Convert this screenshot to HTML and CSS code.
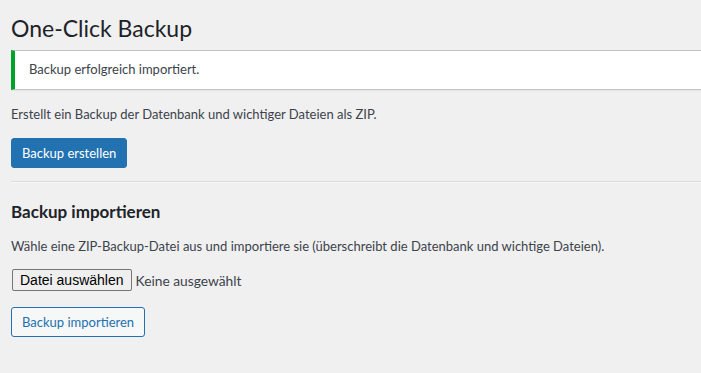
FILE: index.html
```html
<!DOCTYPE html>
<html>
<head>
  <meta charset="UTF-8">
  <title>One-Click Backup</title>
  <link rel="stylesheet" href="styles.css">
</head>
<body>
  <div class="wrap">
    <h1>One-Click Backup</h1>

    <div class="notice notice-success">
      <p>Backup erfolgreich importiert.</p>
    </div>

    <p>Erstellt ein Backup der Datenbank und wichtiger Dateien als ZIP.</p>
    <form class="backup-form">
      <button type="button" class="button button-primary">Backup erstellen</button>
    </form>

    <hr>

    <h2>Backup importieren</h2>
    <p>Wähle eine ZIP-Backup-Datei aus und importiere sie (überschreibt die Datenbank und wichtige Dateien).</p>
    <form class="import-form">
      <div class="file-row">
        <span class="file-button">Datei auswählen</span>
        <span class="file-name">Keine ausgewählt</span>
      </div>
      <button type="button" class="button">Backup importieren</button>
    </form>
  </div>
</body>
</html>
```
FILE: styles.css
```css
/* admin page look */
body {
  margin: 0;
  background: #f0f0f1;
  color: #3c434a;
  font-family: Lato, "Noto Sans", sans-serif;
  font-size: 13px;
  line-height: 1.4em;
  overflow: hidden;
}

.wrap {
  padding: 5px 0 0 11px;
  margin-right: -30px;
}

h1 {
  margin: 0;
  padding: 9px 0 6px;
  font-size: 23px;
  font-weight: 400;
  line-height: 1.3;
  color: #1d2327;
}

p {
  margin: 13px 0;
  line-height: 1.5;
}

/* notices */
.notice {
  background: #fff;
  border: 1px solid #c3c4c7;
  border-left: 4px solid #00a32a;
  box-shadow: 0 1px 1px rgba(0, 0, 0, 0.04);
  padding: 1px 12px;
  margin: 0 0 15px;
}
.notice p {
  margin: 6.5px 0;
  padding: 2px;
}

/* buttons */
.button {
  display: inline-block;
  min-height: 30px;
  margin: 0;
  padding: 0 10px;
  font-family: inherit;
  font-size: 13px;
  line-height: 2.15384615;
  border: 1px solid #2271b1;
  border-radius: 3px;
  background: #f6f7f7;
  color: #2271b1;
  cursor: pointer;
  box-sizing: border-box;
  vertical-align: top;
}
.button-primary {
  background: #2271b1;
  color: #fff;
}

.backup-form {
  margin: 0 0 13px;
  line-height: 0;
}

hr {
  border: 0;
  border-top: 1px solid #dcdcde;
  border-bottom: 1px solid #f6f7f7;
  margin: 0;
}

h2 {
  font-size: 17px;
  font-weight: 700;
  color: #1d2327;
  line-height: 1.4;
  margin: 17px 0 12px;
}

/* fake file input */
.file-row {
  display: flex;
  align-items: center;
  gap: 4px;
  margin: 13px 0 16px 1px;
  line-height: 1.4;
}
.file-button {
  font-family: "Liberation Sans", Arial, sans-serif;
  font-size: 14px;
  line-height: 20px;
  color: #000;
  background: #efefef;
  border: 1px solid #767676;
  border-radius: 2px;
  padding: 0 7px;
}
.file-name {
  font-size: 13.8px;
  color: #3c434a;
}

.import-form {
  line-height: 0;
}
```
